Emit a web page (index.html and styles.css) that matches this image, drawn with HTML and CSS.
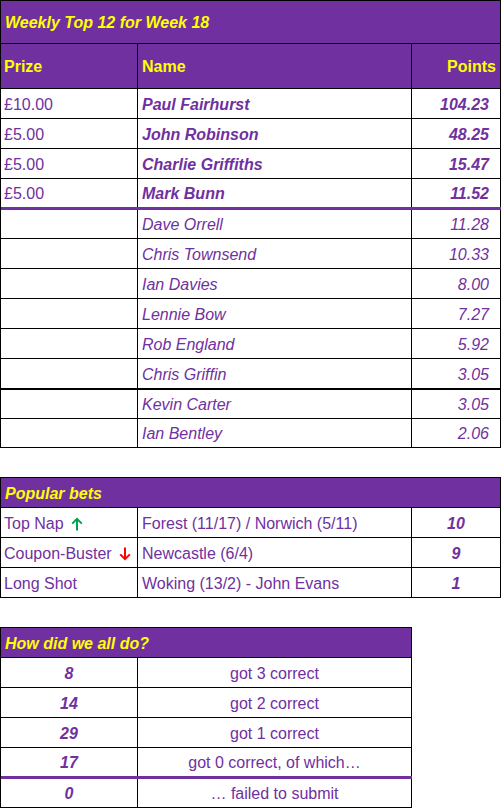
FILE: index.html
```html
<!DOCTYPE html>
<html>
<head>
<meta charset="utf-8">
<title>Weekly Top 12</title>
<link rel="stylesheet" href="styles.css">
</head>
<body>
<div class="sheet wide">
  <div class="row title h43"><div class="cell span">Weekly Top 12 for Week 18</div></div>
  <div class="row head h45">
    <div class="cell">Prize</div>
    <div class="cell pl">Name</div>
    <div class="cell right">Points</div>
  </div>
  <div class="row h30"><div class="cell">£10.00</div><div class="cell pl bi">Paul Fairhurst</div><div class="cell num bi">104.23</div></div>
  <div class="row h30"><div class="cell">£5.00</div><div class="cell pl bi">John Robinson</div><div class="cell num bi">48.25</div></div>
  <div class="row h30"><div class="cell">£5.00</div><div class="cell pl bi">Charlie Griffiths</div><div class="cell num bi">15.47</div></div>
  <div class="row h31 purple-line"><div class="cell">£5.00</div><div class="cell pl bi">Mark Bunn</div><div class="cell num bi">11.52</div></div>
  <div class="row h29"><div class="cell"></div><div class="cell pl it">Dave Orrell</div><div class="cell num it">11.28</div></div>
  <div class="row h30"><div class="cell"></div><div class="cell pl it">Chris Townsend</div><div class="cell num it">10.33</div></div>
  <div class="row h30"><div class="cell"></div><div class="cell pl it">Ian Davies</div><div class="cell num it">8.00</div></div>
  <div class="row h30"><div class="cell"></div><div class="cell pl it">Lennie Bow</div><div class="cell num it">7.27</div></div>
  <div class="row h30"><div class="cell"></div><div class="cell pl it">Rob England</div><div class="cell num it">5.92</div></div>
  <div class="row h31 thick-line"><div class="cell"></div><div class="cell pl it">Chris Griffin</div><div class="cell num it">3.05</div></div>
  <div class="row h29"><div class="cell"></div><div class="cell pl it">Kevin Carter</div><div class="cell num it">3.05</div></div>
  <div class="row h29"><div class="cell"></div><div class="cell pl it">Ian Bentley</div><div class="cell num it">2.06</div></div>
</div>

<div class="sheet wide gap">
  <div class="row title h30"><div class="cell span">Popular bets</div></div>
  <div class="row h30">
    <div class="cell">Top Nap <svg class="arrow" width="12" height="14" viewBox="0 0 12 14"><path d="M6 13.5V1.8M1.2 6.6L6 1.8L10.8 6.6" fill="none" stroke="#00a04a" stroke-width="2"/></svg></div>
    <div class="cell pl">Forest (11/17) / Norwich (5/11)</div>
    <div class="cell center bi">10</div>
  </div>
  <div class="row h30">
    <div class="cell">Coupon-Buster <svg class="arrow" width="12" height="14" viewBox="0 0 12 14"><path d="M6 0.5V12.2M1.2 7.4L6 12.2L10.8 7.4" fill="none" stroke="#ff0000" stroke-width="2"/></svg></div>
    <div class="cell pl">Newcastle (6/4)</div>
    <div class="cell center bi">9</div>
  </div>
  <div class="row h30">
    <div class="cell">Long Shot</div>
    <div class="cell pl">Woking (13/2) - John Evans</div>
    <div class="cell center bi">1</div>
  </div>
</div>

<div class="sheet narrow gap">
  <div class="row title h30"><div class="cell span">How did we all do?</div></div>
  <div class="row h30"><div class="cell center bi">8</div><div class="cell center">got 3 correct</div></div>
  <div class="row h30"><div class="cell center bi">14</div><div class="cell center">got 2 correct</div></div>
  <div class="row h30"><div class="cell center bi">29</div><div class="cell center">got 1 correct</div></div>
  <div class="row h31 purple-line"><div class="cell center bi">17</div><div class="cell center">got 0 correct, of which…</div></div>
  <div class="row h29"><div class="cell center bi">0</div><div class="cell center">… failed to submit</div></div>
</div>
</body>
</html>
```

FILE: styles.css
```css
html, body {
  margin: 0;
  padding: 0;
  background: #ffffff;
}

body {
  font-family: "Liberation Sans", Arial, sans-serif;
  font-size: 16px;
  color: #7030a0;
}

.sheet {
  border-top: 1px solid #000;
  border-left: 1px solid #000;
  box-sizing: border-box;
}

.wide { width: 501px; }
.narrow { width: 412px; }
.gap { margin-top: 29px; }

.row {
  display: grid;
  box-sizing: border-box;
  border-bottom: 1px solid #000;
}

.wide .row { grid-template-columns: 137px 274px 89px; }
.narrow .row { grid-template-columns: 137px 274px; }

.h43 { height: 43px; }
.h45 { height: 45px; }
.h31 { height: 31px; }
.h30 { height: 30px; }
.h29 { height: 29px; }

.purple-line { border-bottom: 3px solid #7030a0; }
.thick-line { border-bottom: 2px solid #000; }

.cell {
  display: flex;
  align-items: center;
  box-sizing: border-box;
  border-right: 1px solid #000;
  padding: 2px 3px 0;
  white-space: nowrap;
  overflow: hidden;
}

.cell.span { grid-column: 1 / -1; }

.title, .head {
  background: #7030a0;
  color: #ffff00;
  font-weight: bold;
}

.title { font-style: italic; }
.title .cell { padding-left: 4px; }

.pl { padding-left: 4px; }
.right { justify-content: flex-end; padding-right: 4px; }
.num { justify-content: flex-end; padding-right: 11px; }
.center { justify-content: center; }

.bi { font-weight: bold; font-style: italic; }
.it { font-style: italic; }

.arrow { margin-left: 7px; flex: none; }
```
